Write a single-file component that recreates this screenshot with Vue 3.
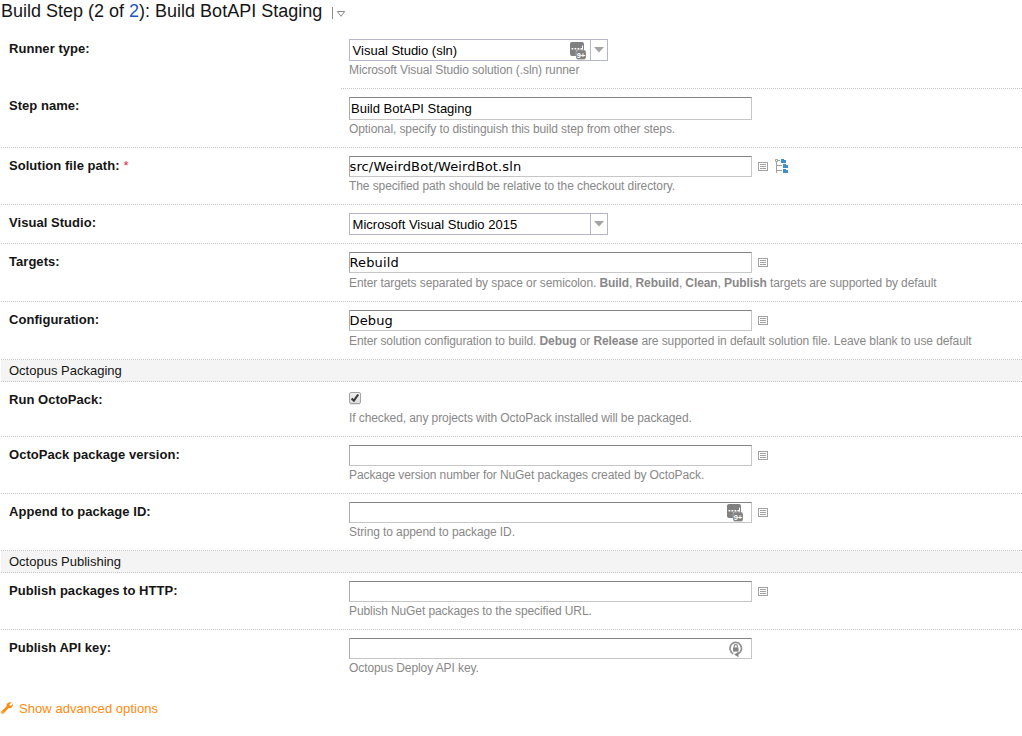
<script setup>
const rows = [
  { id: 'runner', label: 'Runner type:', h: 58, kind: 'select', value: 'Visual Studio (sln)', badge: 'dots', help: 'Microsoft Visual Studio solution (.sln) runner', half: true },
  { id: 'name', label: 'Step name:', h: 59, kind: 'input', value: 'Build BotAPI Staging', tall: true, help: 'Optional, specify to distinguish this build step from other steps.' },
  { id: 'path', label: 'Solution file path:', required: true, h: 57, kind: 'input', value: 'src/WeirdBot/WeirdBot.sln', list: true, tree: true, help: 'The specified path should be relative to the checkout directory.' },
  { id: 'vs', label: 'Visual Studio:', h: 39, kind: 'select', value: 'Microsoft Visual Studio 2015' },
  { id: 'targets', label: 'Targets:', h: 58, kind: 'input', value: 'Rebuild', list: true, help: 'Enter targets separated by space or semicolon. <b>Build</b>, <b>Rebuild</b>, <b>Clean</b>, <b>Publish</b> targets are supported by default' },
  { id: 'config', label: 'Configuration:', h: 58, kind: 'input', value: 'Debug', list: true, help: 'Enter solution configuration to build. <b>Debug</b> or <b>Release</b> are supported in default solution file. Leave blank to use default' },
  { id: 'g1', group: 'Octopus Packaging' },
  { id: 'octo', label: 'Run OctoPack:', h: 55, kind: 'check', help: 'If checked, any projects with OctoPack installed will be packaged.' },
  { id: 'version', label: 'OctoPack package version:', h: 57, kind: 'input', value: '', list: true, help: 'Package version number for NuGet packages created by OctoPack.' },
  { id: 'append', label: 'Append to package ID:', h: 57, kind: 'input', value: '', badge: 'dots', list: true, help: 'String to append to package ID.' },
  { id: 'g2', group: 'Octopus Publishing' },
  { id: 'http', label: 'Publish packages to HTTP:', h: 57, kind: 'input', value: '', list: true, help: 'Publish NuGet packages to the specified URL.' },
  { id: 'key', label: 'Publish API key:', h: 58, kind: 'input', value: '', badge: 'lock', help: 'Octopus Deploy API key.', last: true },
]
</script>

<template>
  <main class="page">
    <h1 class="title">
      <span class="title-text">Build Step (2 of <a>2</a>): Build BotAPI Staging</span>
      <svg class="title-menu" width="14" height="14" viewBox="0 0 14 14">
        <path d="M.5 1v12" stroke="#8a8a8a" />
        <path d="M5.300 5.500h7.400L9 10.300z" fill="none" stroke="#8a8a8a" />
      </svg>
    </h1>
    <div class="form">
      <template v-for="r in rows" :key="r.id">
        <div v-if="r.group" class="group">{{ r.group }}</div>
        <div v-else class="row" :class="['row-' + r.id, { half: r.half, last: r.last }]" :style="{ height: r.h + 'px' }">
          <div class="label"><span>{{ r.label }}</span><i v-if="r.required">*</i></div>
          <div class="cell">
            <div class="control">
              <div v-if="r.kind === 'select'" class="select">
                <span class="value">{{ r.value }}</span>
                <span class="arrow"><svg width="10" height="6" viewBox="0 0 10 6"><path d="M0 0h10L5 5.600z" fill="#a3a3a3" /></svg></span>
              </div>
              <div v-else-if="r.kind === 'input'" class="input" :class="{ tall: r.tall }">{{ r.value }}</div>
              <svg v-else class="check" width="12" height="13" viewBox="0 0 12 13">
                <defs><linearGradient id="cb" x1="0" y1="0" x2="0" y2="1"><stop stop-color="#f0f0f0" /><stop offset="1" stop-color="#dcdcdc" /></linearGradient></defs>
                <path d="M1 12.500h10" stroke="#e4e4e4" />
                <rect x=".5" y=".5" width="11" height="11" rx="1.5" fill="url(#cb)" stroke="#a4a4a4" />
                <path d="M2.600 6.400l2.300 2.300 4.300-6.200" fill="none" stroke="#3c3c3c" stroke-width="2.100" />
              </svg>
              <svg v-if="r.badge === 'dots'" class="badge" :class="'in-' + r.kind" width="17" height="18" viewBox="0 0 17 18">
                <path d="M2 0h10a2 2 0 0 1 2 2v6H8a2 2 0 0 0-2 2v4H2a2 2 0 0 1-2-2V2a2 2 0 0 1 2-2z" fill="#808080" />
                <path d="M1.500 6.800h1.800M4.500 6.800h1.800M7.500 6.800h1.800M10.500 6.800h1.800" stroke="#fff" stroke-width="1.500" />
                <path d="M12.500 3.500v4" stroke="#fff" />
                <rect x="6" y="8" width="10" height="9.500" rx="2" fill="#808080" stroke="#fff" stroke-width=".3" />
                <text x="6.700" y="15.600" font-size="7.500" font-weight="bold" fill="#fff">9+</text>
              </svg>
              <svg v-if="r.badge === 'lock'" class="badge lock" width="14" height="17" viewBox="0 0 14 17">
                <path d="M4.300 12.700A5.700 5.900 0 1 1 8.600 12.900" fill="none" stroke="#929292" stroke-width="1.700" />
                <path d="M9.500 10.800v5.400L5.200 13.600z" fill="#858585" />
                <rect x="4" y="6.400" width="5.500" height="4.200" fill="#858585" />
                <path d="M5.100 6.500V5.300a1.650 1.700 0 0 1 3.300 0v1.200" fill="none" stroke="#858585" stroke-width="1.100" />
              </svg>
              <svg v-if="r.list" class="list" width="10" height="9" viewBox="0 0 10 9">
                <rect x=".5" y=".5" width="9" height="8" fill="#fff" stroke="#a2a2a2" />
                <path d="M2 2.500h6M2 4.500h6M2 6.500h6" stroke="#a2a2a2" />
              </svg>
              <svg v-if="r.tree" class="tree" width="13" height="14" viewBox="0 0 13 14">
                <path d="M.5.5h2v2h-2zM3 1.500h2M1.500 3v11M2 6.500h5M2 11.500h5" fill="none" stroke="#a0a0a0" />
                <path d="M6 0h3v1h2v3H6zM8 5h3v1h2v3H8zM8 10h3v1h2v3H8z" fill="#3f8fc8" />
              </svg>
            </div>
            <div v-if="r.help" class="help" v-html="r.help"></div>
          </div>
        </div>
      </template>
    </div>
    <a class="advanced">
      <svg width="12" height="12" viewBox="0 0 12 12">
        <path d="M10.600.4L8.400 2.200l.2 1.400 1.400.3L11.900 2c.4 2.600-1.500 4.500-4.300 4L3.200 11.100c-.7.800-1.700.9-2.500.3-.8-.7-.7-1.700 0-2.400L5.500 4.600C5 1.700 7.500-.5 10.600.4z" fill="#ff8a0d" />
        <circle cx="2" cy="10" r=".6" fill="#fff" />
      </svg>
      <span>Show advanced options</span>
    </a>
  </main>
</template>

<style>
body { background: #fff; }
</style>

<style scoped>
.page { width: 1022px; height: 736px; overflow: hidden; font-family: "Liberation Sans", Arial, sans-serif; font-size: 13px; color: #151515; }
.title { display: flex; margin: 0; height: 31px; padding-left: 1px; font-size: 18px; font-weight: normal; line-height: 22px; white-space: nowrap; }
.title-text a { color: #1f56c4; }
.title-menu { margin: 6px 0 0 10px; }
.form { margin-left: 1px; }
.row { display: flex; box-sizing: border-box; background: repeating-linear-gradient(90deg, #c6c6c6 0 1px, transparent 1px 2px) 0 100% / 100% 1px no-repeat; }
.row.half { background-position: 340px 100%; }
.row.last { background: none; }
.label { width: 340px; padding: 10px 0 0 8px; box-sizing: border-box; font-weight: bold; line-height: 16px; letter-spacing: .04px; white-space: nowrap; }
.row-name .label { padding-top: 9px; }
.label i { color: #e0284a; font-style: normal; font-weight: normal; margin-left: 4px; }
.cell { padding: 8px 0 0 8px; }
.control { display: flex; position: relative; }
.select { display: flex; box-sizing: border-box; width: 259px; height: 22px; border: 1px solid #b4b4ca; color: #000; line-height: 22px; }
.value { flex: 1; padding-left: 2.600px; }
.arrow { width: 16px; border-left: 1px solid #b4b4ca; display: flex; align-items: center; justify-content: center; }
.input { box-sizing: border-box; width: 403px; height: 21px; border: 1px solid #c6c6c6; border-top-color: #858585; border-left-color: #aaa; font: 13px/19px "DejaVu Sans", sans-serif; letter-spacing: .13px; text-indent: -.5px; color: #000; white-space: nowrap; }
.input.tall { height: 23px; padding-left: 1px; letter-spacing: 0; text-indent: 0; font: 13px/21px "Liberation Sans", Arial, sans-serif; }
.badge { position: absolute; left: 378px; top: 2px; }
.badge.in-select { left: 221px; top: 3px; }
.badge.lock { left: 380px; top: 3px; }
.list { margin: 6px 0 0 6px; }
.tree { margin: 3px 0 0 7px; }
.check { margin: 2px 0 4px; }
.help { margin-top: 1px; font-size: 12px; line-height: 16px; letter-spacing: -.092px; color: #888; white-space: nowrap; }
.row-targets .help, .row-config .help { margin-top: 2px; }
.group { box-sizing: border-box; height: 22px; padding-left: 8px; line-height: 22px; background: repeating-linear-gradient(90deg, #c6c6c6 0 1px, transparent 1px 2px) 0 100% / 100% 1px no-repeat #f4f4f4; }
.advanced { display: flex; gap: 6px; height: 16px; margin: 13px 0 0 1px; color: #ff8a0d; line-height: 16px; letter-spacing: .05px; }
.advanced svg { margin-top: 1px; }
</style>
